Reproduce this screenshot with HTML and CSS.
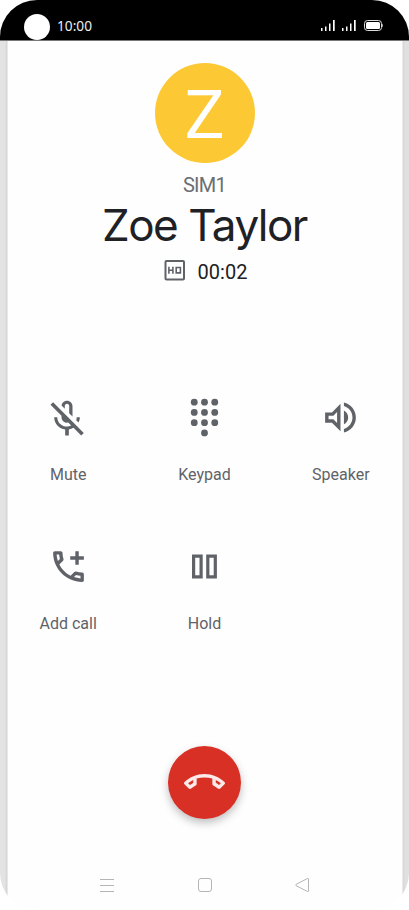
FILE: index.html
```html
<!DOCTYPE html>
<html lang="en">
<head>
    <meta charset="UTF-8">
    <meta name="viewport" content="width=device-width, initial-scale=1.0">
    <title>Call</title>
    <link rel="stylesheet" href="styles.css">
</head>
<body>
    <div class="phone">
        <header class="status-bar">
            <span class="camera"></span>
            <span class="clock">10:00</span>
            <svg class="status-icons" width="64" height="14" viewBox="0 0 64 14">
                <path fill="#fff" d="M1 9h1.500v3H1zM5 7.500h1.500V12H5zM9 4.500h1.500V12H9zM13 1h1.700v11H13zM22 9h1.500v3H22zM26 7.500h1.500V12H26zM30 4.500h1.500V12H30zM34 1h1.700v11H34z"/>
                <rect x="44.500" y="1.500" width="17" height="10" rx="3" fill="none" stroke="#ddd"/>
                <rect x="46" y="3" width="14" height="7" rx="1.500" fill="#fff"/>
                <path fill="#ddd" d="M62 4.500c1 .5 1 3.500 0 4z"/>
            </svg>
        </header>

        <section class="caller">
            <div class="avatar">Z</div>
            <div class="sim">SIM1</div>
            <h1 class="name">Zoe Taylor</h1>
            <div class="call-info">
                <svg width="22" height="22" viewBox="0 0 22 22" fill="none" stroke="#5f6368">
                    <rect x="1.500" y="2" width="18.500" height="18.500" rx="1" stroke-width="2"/>
                    <path stroke-width="1.600" d="M4.900 7.700v7M8.900 7.700v7M4.900 11.300h4M12.200 8.500h4.200v5.400h-4.200z"/>
                </svg>
                <span class="timer">00:02</span>
            </div>
        </section>

        <section class="controls">
            <button class="control mute">
                <svg width="44" height="44" viewBox="0 0 24 24"><path d="M10.8 4.9c0-.66.54-1.2 1.2-1.2s1.2.54 1.2 1.2l-.01 3.910L15 10.600V5c0-1.660-1.340-3-3-3-1.540 0-2.790 1.160-2.960 2.650l1.760 1.760V4.900zM19 11h-1.700c0 .58-.1 1.130-.27 1.640l1.270 1.270c.44-.88.7-1.870.7-2.910zM4.410 2.860L3 4.270l6 6V11c0 1.660 1.340 3 3 3 .23 0 .44-.03.65-.08l1.660 1.660c-.71.33-1.500.52-2.310.52-2.760 0-5.300-2.100-5.300-5.100H5c0 3.410 2.720 6.230 6 6.720V21h2v-3.280c.91-.13 1.770-.45 2.550-.9l4.200 4.200 1.410-1.410L4.410 2.860z"/></svg>
                <span>Mute</span>
            </button>
            <button class="control">
                <svg width="41" height="41" viewBox="0 0 24 24">
                    <circle cx="6" cy="3" r="2"/><circle cx="12" cy="3" r="2"/><circle cx="18" cy="3" r="2"/>
                    <circle cx="6" cy="9" r="2"/><circle cx="12" cy="9" r="2"/><circle cx="18" cy="9" r="2"/>
                    <circle cx="6" cy="15" r="2"/><circle cx="12" cy="15" r="2"/><circle cx="18" cy="15" r="2"/>
                    <circle cx="12" cy="21" r="2"/>
                </svg>
                <span>Keypad</span>
            </button>
            <button class="control">
                <svg width="41" height="41" viewBox="0 0 24 24"><path d="M3 9v6h4l5 5V4L7 9H3zm7-.17v6.340L7.830 13H5v-2h2.830L10 8.830zM16.500 12c0-1.770-1.020-3.290-2.500-4.030v8.050c1.480-.73 2.500-2.250 2.500-4.020zM14 3.230v2.060c2.890.86 5 3.540 5 6.710s-2.110 5.850-5 6.710v2.060c4.010-.91 7-4.490 7-8.770s-2.990-7.860-7-8.770z"/></svg>
                <span>Speaker</span>
            </button>
            <button class="control">
                <svg width="41" height="41" viewBox="0 0 24 24"><path d="M20 15.500c-1.250 0-2.450-.2-3.570-.57-.1-.03-.21-.05-.31-.05-.26 0-.51.1-.71.29l-2.200 2.200c-2.830-1.440-5.150-3.750-6.590-6.590l2.200-2.210c.28-.26.36-.65.25-1C8.700 6.450 8.500 5.250 8.500 4c0-.55-.45-1-1-1H4c-.55 0-1 .45-1 1 0 9.390 7.610 17 17 17 .55 0 1-.45 1-1v-3.500c0-.55-.45-1-1-1zM5.030 5h1.500c.07.88.22 1.750.46 2.590L5.790 8.800c-.41-1.210-.67-2.480-.76-3.800zM19 18.970c-1.320-.09-2.600-.35-3.800-.76l1.200-1.200c.85.24 1.710.39 2.600.45v1.510zM18 6V3h-2v3h-3v2h3v3h2V8h3V6z"/></svg>
                <span>Add call</span>
            </button>
            <button class="control">
                <svg width="41" height="41" viewBox="0 0 41 41"><path fill-rule="evenodd" d="M8 8.500h10.700v24H8zM11.200 11.700v17.600h4.300V11.700zM22.200 8.500h10.700v24H22.200zM25.400 11.700v17.600h4.300V11.700z"/></svg>
                <span>Hold</span>
            </button>
        </section>

        <button class="end-call" aria-label="End call">
            <svg width="41" height="41" viewBox="0 0 24 24"><path d="M12 7C7.460 7 3.340 8.780.29 11.670c-.18.18-.29.43-.29.71s.11.53.29.7l2.480 2.480c.18.18.43.29.71.29.27 0 .52-.1.7-.28.79-.73 1.680-1.360 2.660-1.850.33-.16.56-.51.56-.9v-3.100C8.850 9.250 10.400 9 12 9s3.150.25 4.590.73v3.100c0 .4.23.74.56.9.98.49 1.880 1.110 2.670 1.850.18.17.43.28.7.28.28 0 .53-.11.71-.29l2.480-2.480c.18-.18.29-.43.29-.71s-.12-.52-.3-.7C20.660 8.780 16.540 7 12 7zM5.400 12.220c-.67.37-1.300.81-1.900 1.280l-1.070-1.070c.92-.75 1.920-1.380 2.970-1.890v1.680zm15.100 1.280c-.61-.49-1.240-.92-1.900-1.290v-1.660c1.050.51 2.050 1.130 2.960 1.890L20.500 13.500z"/></svg>
        </button>

        <nav class="nav-bar">
            <svg width="16" height="16" viewBox="0 0 16 16"><path d="M1 2.500h14M1 8.500h14M1 14.500h14"/></svg>
            <svg width="16" height="16" viewBox="0 0 16 16"><rect x="1.500" y="1.500" width="13" height="13" rx="2.500"/></svg>
            <svg width="16" height="16" viewBox="0 0 16 16"><path d="M14.500 2v12q0 1-1 .5L2 8.600q-.9-.6 0-1.200L13.500 1.500q1-.5 1 .5z"/></svg>
        </nav>
    </div>
</body>
</html>
```
FILE: styles.css
```css
* {
    box-sizing: border-box;
}

body {
    margin: 0;
    background-color: #fff;
    font-family: Roboto, sans-serif;
    color: #202124;
}

button {
    border: none;
    padding: 0;
    background: none;
    font: inherit;
    cursor: pointer;
}

svg {
    display: block;
    flex-shrink: 0;
}

.phone {
    width: 409px;
    height: 910px;
    display: flex;
    flex-direction: column;
    align-items: center;
    border-radius: 37px;
    overflow: hidden;
    background: linear-gradient(90deg, #e3e3e3 5px, #d2d2d2 7px, #fefefe 8px, #fefefe 402px, #d6d6d6 403px, #e0e0e0 405px);
}

/* Status bar */
.status-bar {
    width: 100%;
    height: 41px;
    flex-shrink: 0;
    display: flex;
    align-items: flex-start;
    padding: 14px 25px 0 24px;
    background: linear-gradient(#000 40px, #777 40px);
}

.camera {
    width: 26px;
    height: 26px;
    border-radius: 50%;
    background-color: #fff;
}

.clock {
    margin: 2px auto 0 7px;
    font-family: "Noto Sans", sans-serif;
    font-size: 13.7px;
    line-height: 20px;
    color: #eee;
}

.status-icons {
    margin-top: 5px;
}

/* Caller */
.caller {
    display: flex;
    flex-direction: column;
    align-items: center;
    padding-top: 22px;
}

.avatar {
    width: 100px;
    height: 100px;
    border-radius: 50%;
    background-color: #fcc934;
    color: #fff;
    font-size: 67px;
    line-height: 104px;
    text-align: center;
}

.sim {
    margin-top: 10px;
    font-size: 20px;
    line-height: 24px;
    letter-spacing: -0.7px;
    color: #6b6e72;
}

.name {
    margin: 0;
    font-family: Inter, sans-serif;
    font-size: 44px;
    font-weight: 400;
    line-height: 56px;
    letter-spacing: -1.5px;
    white-space: nowrap;
}

.call-info {
    display: flex;
    align-items: center;
    gap: 12px;
    height: 34px;
    padding-left: 2px;
}

.timer {
    padding-top: 3px;
    font-size: 20px;
    line-height: 34px;
}

/* Call controls */
.controls {
    width: 100%;
    margin-top: 110px;
    display: grid;
    grid-template-columns: repeat(3, 1fr);
    row-gap: 58px;
}

.control {
    height: 91px;
    display: flex;
    flex-direction: column;
    align-items: center;
    justify-content: space-between;
    fill: #5f6368;
    color: #5f6368;
    font-size: 16px;
    line-height: 26px;
}

.mute svg {
    margin: 0 2px 0 0;
}

.end-call {
    width: 73px;
    height: 73px;
    margin-top: 109px;
    flex-shrink: 0;
    display: flex;
    align-items: center;
    justify-content: center;
    border-radius: 50%;
    background-color: #d93025;
    fill: #fbeae9;
    box-shadow: 0 4px 8px rgba(0, 0, 0, 0.25);
}

/* Navigation */
.nav-bar {
    width: 211px;
    margin-top: 58px;
    display: flex;
    justify-content: space-between;
    fill: none;
    stroke: #b5b5b5;
}
```
